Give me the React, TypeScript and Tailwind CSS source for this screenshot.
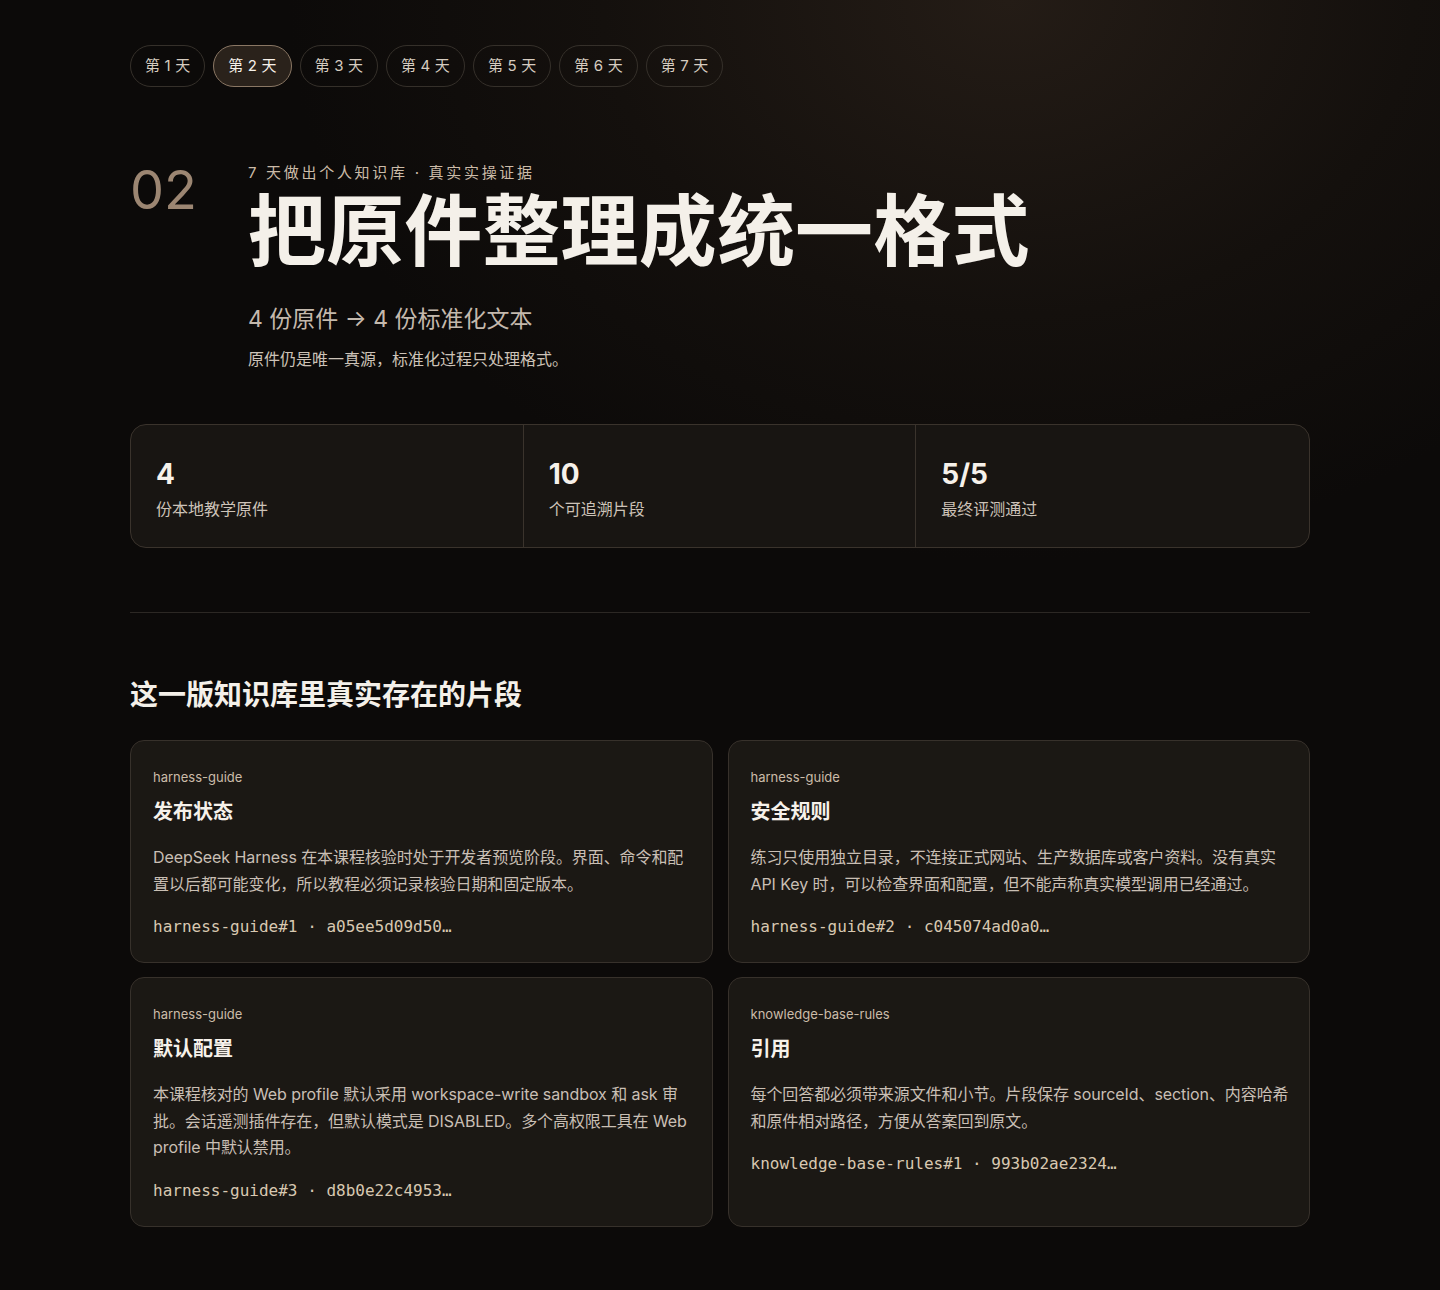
const days = ["第 1 天", "第 2 天", "第 3 天", "第 4 天", "第 5 天", "第 6 天", "第 7 天"];

const stats = [
  { value: "4", label: "份本地教学原件" },
  { value: "10", label: "个可追溯片段" },
  { value: "5/5", label: "最终评测通过" },
];

const chunks = [
  {
    source: "harness-guide",
    title: "发布状态",
    body: "DeepSeek Harness 在本课程核验时处于开发者预览阶段。界面、命令和配置以后都可能变化，所以教程必须记录核验日期和固定版本。",
    ref: "harness-guide#1 · a05ee5d09d50…",
  },
  {
    source: "harness-guide",
    title: "安全规则",
    body: "练习只使用独立目录，不连接正式网站、生产数据库或客户资料。没有真实 API Key 时，可以检查界面和配置，但不能声称真实模型调用已经通过。",
    ref: "harness-guide#2 · c045074ad0a0…",
  },
  {
    source: "harness-guide",
    title: "默认配置",
    body: "本课程核对的 Web profile 默认采用 workspace-write sandbox 和 ask 审批。会话遥测插件存在，但默认模式是 DISABLED。多个高权限工具在 Web profile 中默认禁用。",
    ref: "harness-guide#3 · d8b0e22c4953…",
  },
  {
    source: "knowledge-base-rules",
    title: "引用",
    body: "每个回答都必须带来源文件和小节。片段保存 sourceId、section、内容哈希和原件相对路径，方便从答案回到原文。",
    ref: "knowledge-base-rules#1 · 993b02ae2324…",
  },
];

export default function App() {
  return (
    <div className="min-h-[1290px] bg-[#0c0a09] bg-[radial-gradient(ellipse_900px_700px_at_70%_0%,#241c16_0%,#14100d_45%,#0c0a09_80%)] font-['Inter','Noto_Sans_CJK_SC',sans-serif] text-[#f3eee7]">
      <div className="mx-auto w-[1180px] pb-[64px] pt-[45px]">
        {/* day tabs */}
        <nav className="flex gap-[8px]">
          {days.map((d, i) => (
            <button
              key={d}
              className={
                i === 1
                  ? "h-[42px] rounded-full border border-[#8a7764] bg-[#2a221b] px-[14px] text-[15px] tracking-[0.01em] text-[#f6f1ea]"
                  : "h-[42px] rounded-full border border-[#35302a] px-[14px] text-[15px] tracking-[0.01em] text-[#d6ccc0]"
              }
            >
              {d}
            </button>
          ))}
        </nav>

        {/* hero */}
        <header className="mt-[74px] flex">
          <div className="w-[118px] shrink-0 pt-[2px] text-[54px] font-normal leading-none text-[#9c8672]">02</div>
          <div>
            <p className="mt-[2px] text-[15px] leading-[20px] tracking-[0.18em] text-[#cbbba8]">7 天做出个人知识库 · 真实实操证据</p>
            <h1 className="mt-[1px] text-[78px] font-bold leading-[96px] tracking-[0.002em] text-[#f4f0e9]">
              把原件整理成统一格式
            </h1>
            <p className="mt-[23px] text-[23px] leading-[32px] text-[#c4b9ad]">4 份原件 → 4 份标准化文本</p>
            <p className="mt-[12px] text-[16px] leading-[24px] text-[#cdc3b8]">原件仍是唯一真源，标准化过程只处理格式。</p>
          </div>
        </header>

        {/* stats */}
        <section className="mt-[53px] grid h-[124px] grid-cols-3 rounded-[16px] border border-[#3a332c] bg-[#181512]">
          {stats.map((s, i) => (
            <div
              key={s.label}
              className={i < 2 ? "border-r border-[#3a332c] px-[25px] pt-[31px]" : "px-[25px] pt-[31px]"}
            >
              <div className="text-[28px] font-bold leading-[36px] text-[#f6f1ea]">{s.value}</div>
              <div className="mt-[6px] text-[16px] leading-[22px] text-[#cdc3b8]">{s.label}</div>
            </div>
          ))}
        </section>

        <hr className="mt-[64px] border-0 border-t border-[#2c2824]" />

        {/* chunks */}
        <h2 className="mt-[64px] text-[28px] font-bold leading-[36px] text-[#f4f0e9]">这一版知识库里真实存在的片段</h2>

        <div className="mt-[27px] grid grid-cols-2 gap-x-[15px] gap-y-[14px]">
          {chunks.map((c) => (
            <article
              key={c.ref}
              className="rounded-[14px] border border-[#37312b] bg-[#1b1814] pb-[23px] pl-[22px] pr-[14px] pt-[27px]"
            >
              <div className="text-[13px] leading-[18px] text-[#cbbca9]">{c.source}</div>
              <h3 className="mt-[11px] text-[20px] font-bold leading-[30px] text-[#f6f1ea]">{c.title}</h3>
              <p className="mt-[17px] text-[16px] leading-[26.5px] tracking-[-0.005em] text-[#c9bfb4]">{c.body}</p>
              <div className="mt-[18px] font-['DejaVu_Sans_Mono',monospace] text-[16px] leading-[24px] text-[#d8c8b1]">
                {c.ref}
              </div>
            </article>
          ))}
        </div>
      </div>
    </div>
  );
}
